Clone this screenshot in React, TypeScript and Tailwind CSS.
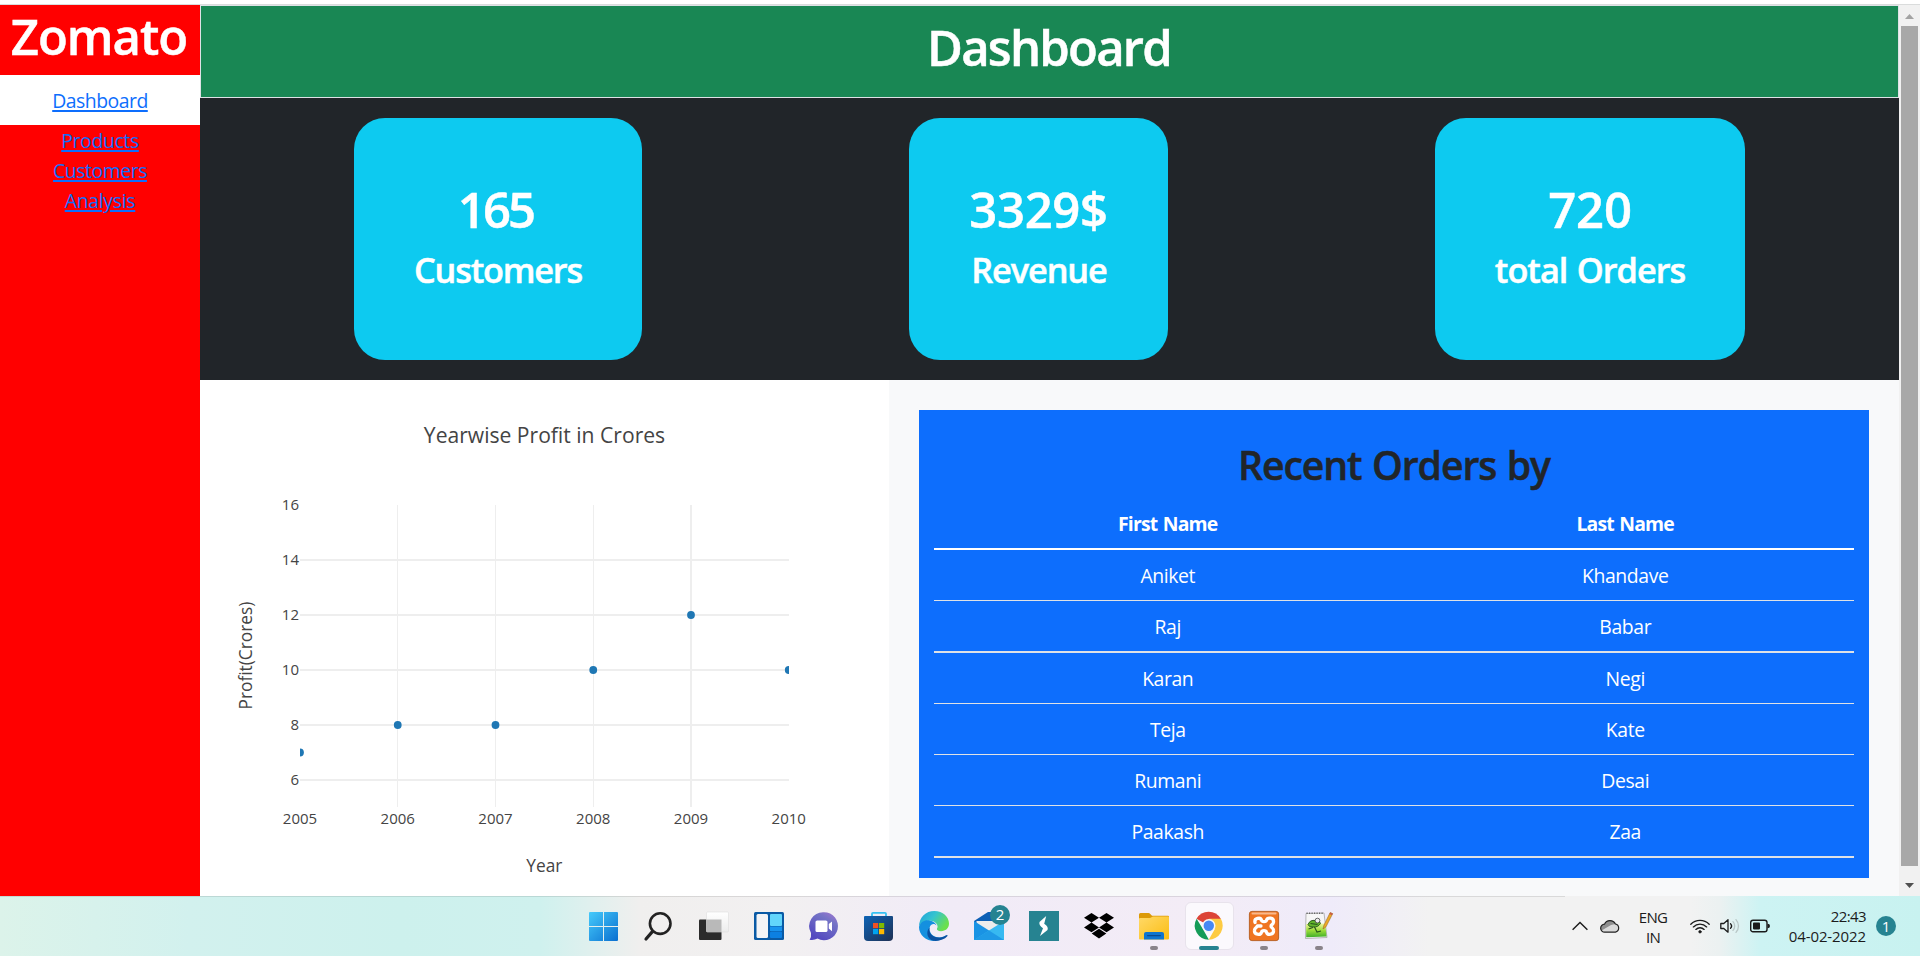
import type { ReactNode } from 'react';

const stats = [
  { value: '165', label: 'Customers', box: 'ml-[154px] w-[288px]', valueClass: 'pr-[5px] tracking-[-2.8px]', labelClass: 'tracking-[-1.2px]' },
  { value: '3329$', label: 'Revenue', box: 'ml-[267px] w-[259px]', valueClass: 'tracking-[-0.3px]', labelClass: 'pl-px tracking-[-1.1px]' },
  { value: '720', label: 'total Orders', box: 'ml-[267px] w-[310px]', valueClass: 'tracking-[-0.2px]', labelClass: 'tracking-[-1px] [word-spacing:1.5px]' },
];

const orders = [
  { first: 'Aniket', last: 'Khandave', line: 'border-b' },
  { first: 'Raj', last: 'Babar', line: 'border-b-2' },
  { first: 'Karan', last: 'Negi', line: 'border-b' },
  { first: 'Teja', last: 'Kate', line: 'border-b' },
  { first: 'Rumani', last: 'Desai', line: 'border-b' },
  { first: 'Paakash', last: 'Zaa', line: 'border-b-2' },
];

const links = [
  { name: 'Products', track: 'tracking-[-0.35px]' },
  { name: 'Customers', track: 'tracking-[-0.45px]' },
  { name: 'Analysis', track: 'tracking-[-0.3px]' },
];

const linkClass = 'text-[#0d6efd] underline decoration-2 underline-offset-2';
const headingClass = 'font-semibold [-webkit-text-stroke:0.5px_currentColor]';

function Sidebar() {
  return (
    <aside className="flex w-[200px] shrink-0 flex-col bg-[#ff0000] text-center text-[19.4px] leading-[30px]">
      <h1 className={`h-[70px] pr-[2px] pt-px text-[49px] leading-[60px] tracking-[-1px] text-white ${headingClass}`}>Zomato</h1>
      <div className="mb-px flex h-[50px] items-center justify-center bg-white pt-[2px]">
        <a className={`${linkClass} tracking-[-0.5px]`}>Dashboard</a>
      </div>
      {links.map((l) => (
        <div key={l.name}>
          <a className={`${linkClass} ${l.track}`}>{l.name}</a>
        </div>
      ))}
    </aside>
  );
}

const X = (year: number) => 300 + (year - 2005) * 97.75;
const Y = (v: number) => 560 + (14 - v) * 27.5;
const points = [
  [2005, 7],
  [2006, 8],
  [2007, 8],
  [2008, 10],
  [2009, 12],
  [2010, 10],
];

function Chart() {
  return (
    <svg width="689" height="516" viewBox="200 380 689 516" className="block shrink-0 bg-white" fill="#444" fontFamily="Open Sans, sans-serif">
      <defs>
        <clipPath id="plot">
          <rect x="300" y="505" width="489" height="302" />
        </clipPath>
      </defs>
      <text x="544.5" y="443" fontSize="21.1" textAnchor="middle">Yearwise Profit in Crores</text>
      <g fill="#eee" shapeRendering="crispEdges">
        <rect x="397" y="505" width="1" height="302" />
        <rect x="495" y="505" width="1" height="302" />
        <rect x="593" y="505" width="1" height="302" />
        <rect x="690" y="505" width="2" height="302" />
        {[6, 8, 10, 12, 14].map((v) => (
          <rect key={v} x="300" y={Y(v) - 1} width="489" height="2" />
        ))}
      </g>
      <g fontSize="15">
        {[6, 8, 10, 12, 14, 16].map((v) => (
          <text key={v} x="299" y={Y(v) + 5} textAnchor="end">{v}</text>
        ))}
        {points.map(([year]) => (
          <text key={year} x={X(year)} y="824" textAnchor="middle">{year}</text>
        ))}
      </g>
      <g clipPath="url(#plot)" fill="#1f77b4">
        {points.map(([year, v]) => (
          <circle key={year} cx={X(year)} cy={Y(v)} r="3.9" />
        ))}
      </g>
      <text x="544.3" y="872" fontSize="17.3" textAnchor="middle">Year</text>
      <text transform="translate(251.500 655.6) rotate(-90)" fontSize="17.3" textAnchor="middle">Profit(Crores)</text>
    </svg>
  );
}

function Orders() {
  return (
    <div className="flex-1 bg-[#f8f9fa] px-[30px] pt-[30px]">
      <div className="h-[468px] bg-[#0d6efd] px-[15px] pt-[31px]">
        <h2 className={`text-center text-[39.2px] leading-[48px] tracking-[-1.1px] text-[#212529] [word-spacing:1.5px] ${headingClass}`}>Recent Orders by</h2>
        <div className="mt-[9px] text-center text-[19.4px] tracking-[-0.4px] text-white">
          <div className="grid h-[52px] grid-cols-2 items-center border-b-2 border-white pl-[5px] pt-[2px] font-bold tracking-[-0.8px] [word-spacing:1px]">
            <span>First Name</span>
            <span>Last Name</span>
          </div>
          {orders.map((o) => (
            <div key={o.first} className={`grid grid-cols-2 border-[#dee2e6] pl-[5px] pt-[2px] leading-[48px] ${o.line}`}>
              <span>{o.first}</span>
              <span>{o.last}</span>
            </div>
          ))}
        </div>
      </div>
    </div>
  );
}

function Scrollbar() {
  return (
    <div className="flex w-[21px] shrink-0 flex-col items-center bg-[#f1f1f1]">
      <svg width="9" height="5" viewBox="0 0 9 5" className="mt-[9px]">
        <path d="M0 5L4.5 0L9 5z" fill="#a3a3a3" />
      </svg>
      <div className="mt-[7px] h-[840px] w-[17px] bg-[#a8a8a8]" />
      <svg width="9" height="5" viewBox="0 0 9 5" className="mt-[17px]">
        <path d="M0 0L4.5 5L9 0z" fill="#505050" />
      </svg>
    </div>
  );
}

const icons: { name: string; mark?: 'open' | 'active'; art: ReactNode }[] = [
  {
    name: 'start',
    art: (
      <g fill="url(#win)">
        <path d="M0 2q0-1 1-1h13v14H0zM15 1h13q1 0 1 1v13H15zM0 16h14v14H1q-1 0-1-1zM15 16h14v13q0 1-1 1H15z" />
      </g>
    ),
  },
  {
    name: 'search',
    art: (
      <g fill="none" stroke="#222" strokeLinecap="round">
        <circle cx="16.2" cy="12.6" r="10.3" strokeWidth="2.6" />
        <path d="M8.6 20.4L2 28" strokeWidth="3.2" />
      </g>
    ),
  },
  {
    name: 'tasks',
    art: (
      <g>
        <rect y="8.5" width="22.5" height="20.5" rx="1" fill="#2b2b2b" />
        <rect x="7.5" y="1" width="22" height="20" rx="1" fill="url(#pane)" stroke="#ddd" strokeWidth=".6" />
        <rect x="7.5" y="8.5" width="15" height="12.5" fill="#b9b9b9" />
      </g>
    ),
  },
  {
    name: 'widgets',
    art: (
      <g>
        <rect y="1" width="30" height="28" rx="1.5" fill="#0a5aa5" />
        <rect x="2.5" y="3" width="11.5" height="24" rx="1.5" fill="#f4f4f6" />
        <rect x="16" y="3" width="12" height="12" rx="1" fill="#62d5fb" />
        <rect x="16" y="15.5" width="12" height="4.5" fill="#1893ee" />
        <rect x="16" y="20.5" width="12" height="6.5" rx="1" fill="#0c80e2" />
      </g>
    ),
  },
  {
    name: 'chat',
    art: (
      <g>
        <path d="M15 1.2a14 14 0 1 1-6.5 26.4Q5 29.6.6 28.8Q2.6 26 2 22A14 14 0 0 1 15 1.2z" fill="url(#chat)" />
        <rect x="6.5" y="9.5" width="12" height="11.5" rx="1.6" fill="#fff" />
        <path d="M19.8 13l3.2-2.6v9.8l-3.2-2.6z" fill="#fff" />
      </g>
    ),
  },
  {
    name: 'store',
    art: (
      <g>
        <path d="M8 6V2.8q0-1 1-1h12q1 0 1 1V6" fill="none" stroke="#35c1f1" strokeWidth="1.8" />
        <path d="M0 6q0-1 1-1h27q1 0 1 1v20q0 4-4 4H4q-4 0-4-4z" fill="url(#store)" />
        <rect x="9" y="12" width="5.2" height="5.2" fill="#f25022" />
        <rect x="15" y="12" width="5.2" height="5.2" fill="#7fba00" />
        <rect x="9" y="18" width="5.2" height="5.2" fill="#00a4ef" />
        <rect x="15" y="18" width="5.2" height="5.2" fill="#ffb900" />
      </g>
    ),
  },
  {
    name: 'edge',
    art: (
      <g>
        <path d="M0 16C0 6 7 0 15.3 0C24 0 30 6 30 12.6c0 5-3.6 7.6-8 7.6c-3 0-4.6-1.3-4-2.6c1.4-2 .4-6.4-5-7.6C7 9 1 11.5 0 16z" fill="url(#edgeTop)" />
        <path d="M0 16C1 11 6 8.5 10.5 9.4c4 .6 6.5 3 7 5.2c-1.5-2.5-5.5-2.4-6.8 1.6C9.5 21 14 27 21 26.5c3-.3 5-1.3 6.5-2.4C25 28 20 30 15.5 30C7 30 0 24 0 16z" fill="#1490df" />
        <path d="M10.6 16.5C9 22 14 27 21 26.5c2.5-.2 4.7-1.2 6.3-2.2c1-.6 1.5.1 1 1C25.5 28.5 20 30.4 14.5 29.8C8 28.5 6.5 20.5 10.6 16.5z" fill="#0b50a0" />
      </g>
    ),
  },
  {
    name: 'mail',
    art: (
      <g>
        <path d="M0 10L14 1h3l13 9v4H0z" fill="#0d5fb5" />
        <path d="M2.5 10h25v6L15 20L2.5 14z" fill="#ececec" />
        <path d="M0 10L30 29H0z" fill="#1a93e4" />
        <path d="M30 10v19H0z" fill="#37b9f1" />
        <path d="M0 29l15-9.5L30 29z" fill="#1f9ae6" />
        <circle cx="26" cy="4" r="10" fill="#268391" />
        <text x="26" y="9.2" fontSize="15" fill="#fff" textAnchor="middle">2</text>
      </g>
    ),
  },
  {
    name: 'sharp',
    art: (
      <g>
        <rect width="30" height="30" fill="#268391" />
        <path d="M17.2 5L10.5 11Q9.6 14.5 14 17.2L11 25L18.5 19Q19.800 15.500 15.200 12.800z" fill="#fff" />
      </g>
    ),
  },
  {
    name: 'dropbox',
    art: (
      <path d="M7.5 2L15 6.8L7.5 11.6L0 6.8zM22.5 2L30 6.8L22.5 11.6L15 6.8zM7.5 11.6L15 16.4L7.5 21.2L0 16.4zM22.5 11.6L30 16.4L22.5 21.2L15 16.4zM15 17.8L22.3 22.6L15 27.4L7.7 22.6z" />
    ),
  },
  {
    name: 'files',
    mark: 'open',
    art: (
      <g>
        <path d="M0 3.5q0-1.5 1.5-1.5h8q1 0 1.8.9L13 4.8H29q1 0 1 1V10H0z" fill="#dc9a08" />
        <path d="M0 8q0-1 1-1h10l3-1.6h15q1 0 1 1V27.5q0 1-1 1H1q-1 0-1-1z" fill="url(#folder)" />
        <path d="M5 28.5v-5.5q0-2 2-2h16q2 0 2 2v5.5z" fill="#0f75cf" />
        <rect x="8" y="24" width="14" height="1.2" rx=".6" fill="#0a4a90" />
      </g>
    ),
  },
  {
    name: 'chrome',
    mark: 'active',
    art: (
      <g>
        <path d="M2.5 7.8A14 14 0 0 1 26.8 7.8L15 14.7z" fill="#dc4437" />
        <path d="M2.6 7.8L9 18.2L14.9 28.7A14 14 0 0 1 2.6 7.8z" fill="#159c58" />
        <path d="M14.7 7.8H26.9A14 14 0 0 1 14.7 28.7L20.7 18.2z" fill="#fdcb43" />
        <circle cx="14.8" cy="14.7" r="6.7" fill="#f5f5f5" />
        <circle cx="14.8" cy="14.7" r="5.2" fill="#4688f4" />
      </g>
    ),
  },
  {
    name: 'xampp',
    mark: 'open',
    art: (
      <g>
        <rect x=".4" y=".4" width="29.2" height="29.2" rx="2.5" fill="#ef7522" stroke="#b65a1c" strokeWidth=".9" />
        <rect x="2.5" y="1.6" width="25" height="1.8" rx=".9" fill="#f9b98c" />
        <path
          d="M6 11.5C5 7 11.500 6 12.500 9.200C13 11.200 17 11.200 17.500 9.200C18.500 6 25 6.500 24.500 11.200C24.300 13.800 22 13.500 22 15.200C22 17 24.300 16.600 24.500 19.200C25 24 18.500 24.500 17.500 21.200C17 19.200 13 19.200 12.500 21.200C11.500 24.500 5 24 5.500 19.200C5.700 16.600 8 16.600 8.500 14.800L12 15"
          fill="none"
          stroke="#fff"
          strokeWidth="3.3"
          strokeLinecap="round"
          strokeLinejoin="round"
        />
      </g>
    ),
  },
  {
    name: 'notepad',
    mark: 'open',
    art: (
      <g>
        <path d="M2 2.5L20 2L23 26.5L1.5 27.5z" fill="#f7f7f7" stroke="#a5a5a5" strokeWidth=".8" />
        <path d="M2.2 13L21.300 12.500L22.5 25.5L2.2 26.3z" fill="url(#grass)" />
        <path d="M2.5 2.3H20" stroke="#666" strokeWidth="1.4" strokeDasharray="1.2 1.3" />
        <path d="M4 13.500Q6 8.500 11.500 9.500Q16 9 16.500 12.500Q14 16.500 9 16Q5 16.500 4 13.500z" fill="#62b52c" stroke="#24531a" strokeWidth=".9" />
        <circle cx="13.5" cy="9.6" r="2.4" fill="#eee" stroke="#444" strokeWidth=".8" />
        <path d="M4.500 18l4.500-1.500M10.500 16l2.500 5l4-1M6.500 12.500l7 1" fill="none" stroke="#24531a" strokeWidth="1.1" />
        <path d="M19 18L20 14L26.2 1.500L28.700 2.600L22 15.800z" fill="#eda928" stroke="#9b6a22" strokeWidth=".6" />
        <path d="M26.2 1.500L28.700 2.600L28 4.200L25.400 3.100z" fill="#c85a48" />
      </g>
    ),
  },
];

function Tray() {
  return (
    <div className="ml-auto flex items-center pr-6 text-[#1b1b1b]">
      <svg width="16" height="10" viewBox="0 0 16 10" fill="none" stroke="currentColor" strokeWidth="1.4">
        <path d="M.6 8.8L8 1.4L15.4 8.8" />
      </svg>
      <svg width="20" height="16" viewBox="0 0 20 16" className="ml-3">
        <path d="M4.8 14.2a4 4 0 0 1-.3-8A6 6 0 0 1 15.4 6a4.2 4.2 0 0 1 0 8.2z" fill="#dadada" />
        <path d="M1.6 12.5L11 7l4.5-1A6 6 0 0 0 4.5 6.2A4 4 0 0 0 1.6 12.5z" fill="#8f8f8f" />
        <path d="M4.8 14.2a4 4 0 0 1-.3-8A6 6 0 0 1 15.4 6a4.2 4.2 0 0 1 0 8.2z" fill="none" stroke="#222" strokeWidth="1.2" />
      </svg>
      <div className="ml-[13px] w-10 pt-px text-center text-[15px] leading-5 tracking-[-0.7px]">
        <div>ENG</div>
        <div>IN</div>
      </div>
      <svg width="20" height="16" viewBox="0 0 20 16" className="ml-[17px]" fill="none" stroke="currentColor" strokeWidth="1.35" strokeLinecap="round">
        <path d="M.8 6.2a13 13 0 0 1 18.4 0M3.4 8.9a9.3 9.3 0 0 1 13.2 0M5.9 11.4a5.8 5.8 0 0 1 8.2 0" />
        <circle cx="10" cy="13.8" r="1.3" fill="currentColor" strokeWidth=".6" />
      </svg>
      <svg width="20" height="16" viewBox="0 0 20 16" className="ml-[10px]" fill="none" stroke="currentColor" strokeWidth="1.3" strokeLinecap="round" strokeLinejoin="round">
        <path d="M.8 5.5H3.8L8 1.8v12.4L3.8 10.5H.8z" />
        <path d="M10.5 5.6a3.5 3.5 0 0 1 0 4.8" />
        <path d="M13 3.6a6.5 6.5 0 0 1 0 8.8M16 1.6a9.5 9.5 0 0 1 0 12.8" stroke="#b9c6c6" />
      </svg>
      <svg width="20" height="14" viewBox="0 0 20 14" className="ml-[10px]">
        <rect x=".7" y="1.2" width="16.3" height="11.6" rx="2.3" fill="none" stroke="currentColor" strokeWidth="1.4" />
        <rect x="3" y="3.6" width="7" height="6.8" rx=".8" fill="currentColor" />
        <path d="M17.5 4.8q2.5 0 2.5 2.2t-2.5 2.2z" fill="currentColor" />
      </svg>
      <div className="ml-[16px] w-20 whitespace-nowrap text-right text-[15px] leading-5">
        <div className="tracking-[-0.6px]">22:43</div>
        <div className="tracking-[-0.1px]">04-02-2022</div>
      </div>
      <div className="ml-[10px] flex size-5 items-center justify-center rounded-full bg-[#268391] text-[15px] leading-none text-white">1</div>
    </div>
  );
}

function Taskbar() {
  return (
    <footer className="flex h-[60px] shrink-0 items-stretch bg-[linear-gradient(90deg,#dcf3ea_0px,#d2f1ee_190px,#cdf1ed_400px,#cff1ee_540px,#f0efee_640px,#f2f0f1_780px,#f1ebf7_950px,#f3ecf6_1200px,#efebfa_1330px,#f2f2f2_1430px,#f2f2f2_1690px,#ebf1f1_1720px,#cdf3f3_1760px,#c8f2f0_1920px)] pl-[576.5px]">
      <div className="absolute left-0 h-px w-[1565px] bg-black/10" />
      <svg width="0" height="0" className="absolute">
        <defs>
          <linearGradient id="win" x1="0" y1="0" x2="1" y2="1"><stop stopColor="#46cbfb" /><stop offset="1" stopColor="#0a6fd0" /></linearGradient>
          <linearGradient id="pane" x1="0" y1="0" x2="0" y2="1"><stop stopColor="#fff" /><stop offset="1" stopColor="#ececec" /></linearGradient>
          <linearGradient id="chat" x1="1" y1="0" x2=".4" y2="1"><stop stopColor="#a877d2" /><stop offset=".35" stopColor="#7473c6" /><stop offset="1" stopColor="#5449c0" /></linearGradient>
          <linearGradient id="store" x1="0" y1="0" x2="1" y2="1"><stop stopColor="#0d63b5" /><stop offset="1" stopColor="#1f3053" /></linearGradient>
          <linearGradient id="edgeTop" x1="0" y1="0" x2="1" y2=".5"><stop stopColor="#1e9fdd" /><stop offset=".5" stopColor="#35c4cf" /><stop offset="1" stopColor="#6be04d" /></linearGradient>
          <linearGradient id="folder" x1="0" y1="0" x2="1" y2="1"><stop stopColor="#ffd968" /><stop offset="1" stopColor="#fbbd12" /></linearGradient>
          <linearGradient id="grass" x1="0" y1="0" x2="0" y2="1"><stop stopColor="#f3f7a0" /><stop offset=".5" stopColor="#9bdc3a" /><stop offset="1" stopColor="#3fae2a" /></linearGradient>
        </defs>
      </svg>
      {icons.map((i) => (
        <div key={i.name} className="relative flex w-[55px] shrink-0 justify-center">
          {i.mark === 'active' && <div className="absolute left-[3px] top-[6px] h-[48px] w-[49px] rounded-md border border-[#e8e3ec] bg-[#fbf9fd]" />}
          <svg width="30" height="30" viewBox="0 0 30 30" className="relative mt-[15px] overflow-visible">
            {i.art}
          </svg>
          {i.mark === 'open' && <div className="absolute top-[50px] h-1 w-2 rounded-full bg-[#89838a]" />}
          {i.mark === 'active' && <div className="absolute top-[50px] h-1 w-5 rounded-full bg-[#268391]" />}
        </div>
      ))}
      <Tray />
    </footer>
  );
}

export default function App() {
  return (
    <div className="flex h-[956px] w-[1920px] flex-col overflow-hidden bg-white font-['Open_Sans','Noto_Sans',sans-serif]">
      <div className="h-[5px] shrink-0 border-b border-[#dadcdc] bg-white" />
      <div className="flex h-[891px] shrink-0">
        <Sidebar />
        <main className="flex flex-1 flex-col">
          <header className="h-[93px] border border-[#dee2e6] bg-[#198754] pt-[11px]">
            <h1 className={`pr-px text-center text-[49px] leading-[60px] tracking-[-1.75px] text-white ${headingClass}`}>Dashboard</h1>
          </header>
          <section className="flex h-[282px] items-start bg-[#212529] pt-5">
            {stats.map((s) => (
              <div key={s.label} className={`h-[242px] rounded-[31px] bg-[#0dcaf0] pt-[61px] text-center text-white ${headingClass} ${s.box}`}>
                <div className={`text-[49px] leading-[60px] ${s.valueClass}`}>{s.value}</div>
                <div className={`mt-[10px] text-[34.3px] leading-[42px] ${s.labelClass}`}>{s.label}</div>
              </div>
            ))}
          </section>
          <section className="flex h-[516px]">
            <Chart />
            <Orders />
          </section>
        </main>
        <Scrollbar />
      </div>
      <Taskbar />
    </div>
  );
}
